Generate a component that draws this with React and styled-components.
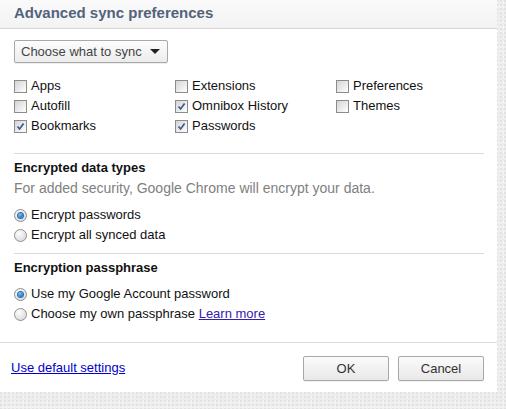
import React from "react";
import styled, { createGlobalStyle } from "styled-components";

const Global = createGlobalStyle`
  html, body { margin: 0; padding: 0; }
  body {
    width: 506px;
    height: 409px;
    overflow: hidden;
    font-family: "Liberation Sans", Arial, sans-serif;
    font-size: 13px;
    color: #222;
    background-color: #eeeeee;
    background-image:
      radial-gradient(circle at 1px 1px, #e2e2e2 0.8px, transparent 1px),
      radial-gradient(circle at 3px 2px, #f8f8f8 0.8px, transparent 1px);
    background-size: 4px 4px, 3px 5px;
  }
`;

const Dialog = styled.div`
  width: 497px;
  height: 392px;
  background: #fff;
  display: flex;
  flex-direction: column;
`;

const Header = styled.div`
  height: 28px;
  border-bottom: 1px solid #d6d6d6;
  background: linear-gradient(#fafafa, #f3f3f3);
  display: flex;
  align-items: center;
  padding: 0 14px;
`;

const Title = styled.h1`
  margin: 0;
  font-size: 15px;
  font-weight: bold;
  color: #53627b;
  line-height: 18px;
  position: relative;
  top: -1px;
`;

const Body = styled.div`
  flex: 1;
  padding: 11px 13px 0 14px;
  display: flex;
  flex-direction: column;
`;

const Select = styled.div`
  width: 141px;
  height: 21px;
  border: 1px solid #a9a9a9;
  border-radius: 2px;
  background: linear-gradient(#fdfdfd, #ececec);
  box-shadow: 0 1px 1px rgba(0,0,0,0.08);
  display: flex;
  align-items: center;
  justify-content: space-between;
  padding: 0 5px 0 6px;
  box-sizing: content-box;
  font-size: 13px;
  color: #444;
`;

const Arrow = styled.span`
  width: 0;
  height: 0;
  border-left: 5px solid transparent;
  border-right: 5px solid transparent;
  border-top: 5px solid #222;
  margin-right: 2px;
`;

const Grid = styled.div`
  margin-top: 12px;
  display: grid;
  grid-template-columns: 161px 161px 161px;
  grid-auto-rows: 20px;
`;

const Option = styled.label`
  display: flex;
  align-items: center;
  gap: 4px;
  height: 20px;
  font-size: 13px;
  color: #111;
  white-space: nowrap;
`;

const Box = styled.span`
  width: 11px;
  height: 11px;
  border: 1px solid #8c8c8c;
  background: linear-gradient(135deg, #d4d4d4, #f4f4f4 75%, #fdfdfd);
  display: inline-flex;
  align-items: center;
  justify-content: center;
  position: relative;
  top: 1px;
  flex: none;
`;

const Radio = styled.span`
  width: 11px;
  height: 11px;
  border: 1px solid #8f8f8f;
  border-radius: 50%;
  background: radial-gradient(circle at 35% 30%, #fdfdfd, #dcdcdc 80%);
  display: inline-flex;
  align-items: center;
  justify-content: center;
  position: relative;
  top: 1px;
  flex: none;
`;

const Dot = styled.span`
  width: 5px;
  height: 5px;
  border-radius: 50%;
  background: radial-gradient(circle at 40% 35%, #7fc4f5, #1760b5 80%);
  box-shadow: 0 0 0 1px #2a6fb5;
`;

const Separator = styled.hr`
  border: none;
  border-top: 1px solid #dadada;
  margin: ${(p) => p.$top}px 0 0 0;
  height: 0;
`;

const Heading = styled.div`
  margin-top: 4px;
  font-weight: bold;
  font-size: 13px;
  line-height: 20px;
  color: #111;
`;

const Description = styled.div`
  font-size: 14px;
  line-height: 20px;
  color: #808080;
`;

const RadioGroup = styled.div`
  margin-top: ${(p) => p.$top}px;
  display: flex;
  flex-direction: column;
`;

const Link = styled.a`
  color: ${(p) => p.$color || "#0000cc"};
  text-decoration: underline;
  cursor: pointer;
`;

const Footer = styled.div`
  border-top: 1px solid #dcdcdc;
  height: 49px;
  display: flex;
  align-items: center;
  justify-content: space-between;
  padding: 0 13px 0 11px;
`;

const FooterLink = styled(Link)`
  font-size: 13px;
`;

const Buttons = styled.div`
  display: flex;
  gap: 9px;
  position: relative;
  top: 1px;
`;

const Button = styled.button`
  width: 86px;
  height: 25px;
  border: 1px solid #a8a8a8;
  border-radius: 2px;
  background: linear-gradient(#fbfbfb, #e8e8e8);
  box-shadow: 0 1px 1px rgba(0,0,0,0.06);
  font-family: "Liberation Sans", Arial, sans-serif;
  font-size: 13px;
  color: #333;
  padding: 0;
`;

const Check = () => (
  <svg width="9" height="9" viewBox="0 0 9 9">
    <path d="M1.5 4.5 L3.6 7 L7.6 1.6" fill="none" stroke="#3c5a8c" strokeWidth="1.7" />
  </svg>
);

const CheckOption = ({ checked, children }) => (
  <Option>
    <Box>{checked && <Check />}</Box>
    {children}
  </Option>
);

const RadioOption = ({ checked, children }) => (
  <Option>
    <Radio>{checked && <Dot />}</Radio>
    {children}
  </Option>
);

const items = [
  ["Apps", false],
  ["Extensions", false],
  ["Preferences", false],
  ["Autofill", false],
  ["Omnibox History", true],
  ["Themes", false],
  ["Bookmarks", true],
  ["Passwords", true],
];

export default function App() {
  return (
    <>
      <Global />
      <Dialog>
        <Header>
          <Title>Advanced sync preferences</Title>
        </Header>
        <Body>
          <Select>
            Choose what to sync
            <Arrow />
          </Select>
          <Grid>
            {items.map(([label, checked]) => (
              <CheckOption key={label} checked={checked}>
                {label}
              </CheckOption>
            ))}
          </Grid>
          <Separator $top={18} />
          <Heading>Encrypted data types</Heading>
          <Description>For added security, Google Chrome will encrypt your data.</Description>
          <RadioGroup $top={6}>
            <RadioOption checked>Encrypt passwords</RadioOption>
            <RadioOption>Encrypt all synced data</RadioOption>
          </RadioGroup>
          <Separator $top={9} />
          <Heading>Encryption passphrase</Heading>
          <RadioGroup $top={5}>
            <RadioOption checked>Use my Google Account password</RadioOption>
            <RadioOption>
              <span>
                Choose my own passphrase <Link $color="#3320b0">Learn more</Link>
              </span>
            </RadioOption>
          </RadioGroup>
        </Body>
        <Footer>
          <FooterLink>Use default settings</FooterLink>
          <Buttons>
            <Button>OK</Button>
            <Button>Cancel</Button>
          </Buttons>
        </Footer>
      </Dialog>
    </>
  );
}
